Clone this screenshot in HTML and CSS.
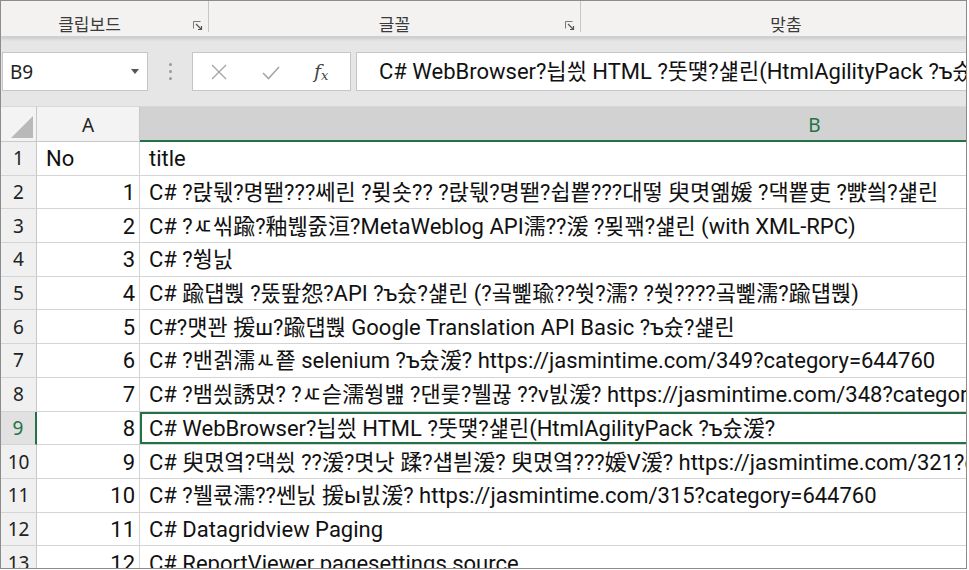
FILE: index.html
```html
<!DOCTYPE html>
<html lang="ko">
  <head>
    <meta charset="UTF-8" />
    <meta name="viewport" content="width=device-width, initial-scale=1.0" />
    <title>Excel - sheet</title>
    <link rel="stylesheet" href="styles.css">
  </head>
  <body>
    <div class="frame">
      <!-- Ribbon group labels -->
      <div class="ribbon">
        <div class="group group-clip">
          <span class="group-label">클립보드</span>
          <svg class="launcher" viewBox="0 0 10 10" width="10" height="10">
            <path d="M0.5 7.5V0.5H7.5" fill="none" stroke="#777" stroke-width="1"/>
            <path d="M3 3L8.5 8.5M5 8.5H8.5V5" fill="none" stroke="#555" stroke-width="1.2"/>
          </svg>
        </div>
        <div class="group group-font">
          <span class="group-label">글꼴</span>
          <svg class="launcher" viewBox="0 0 10 10" width="10" height="10">
            <path d="M0.5 7.5V0.5H7.5" fill="none" stroke="#777" stroke-width="1"/>
            <path d="M3 3L8.5 8.5M5 8.5H8.5V5" fill="none" stroke="#555" stroke-width="1.2"/>
          </svg>
        </div>
        <div class="group group-align">
          <span class="group-label">맞춤</span>
        </div>
      </div>

      <!-- Name box and formula bar -->
      <div class="formula-area">
        <div class="name-box">
          <span>B9</span>
          <span class="caret"></span>
        </div>
        <div class="grip"><i></i><i></i><i></i></div>
        <div class="fx-buttons">
          <svg class="fx-btn" viewBox="0 0 20 20" width="20" height="20">
            <path d="M3 3L17 17M17 3L3 17" stroke="#a6a6a6" stroke-width="1.4" fill="none"/>
          </svg>
          <svg class="fx-btn" viewBox="0 0 20 20" width="20" height="20">
            <path d="M2 11L7.5 16.5L18 5" stroke="#a6a6a6" stroke-width="1.6" fill="none"/>
          </svg>
          <span class="fx-label">f<sub>x</sub></span>
        </div>
        <div class="formula-input">C# WebBrowser?늽씠 HTML ?뚯떛?섍린(HtmlAgilityPack ?ъ슜湲?</div>
      </div>

      <!-- Worksheet grid -->
      <div class="sheet">
        <div class="corner"><span class="corner-tri"></span></div>
        <div class="col-head">A</div>
        <div class="col-head active">B</div>

        <div class="row-head">1</div>
        <div class="cell">No</div>
        <div class="cell">title</div>

        <div class="row-head">2</div>
        <div class="cell num">1</div>
        <div class="cell">C# ?랁뒋?명뙏???쎄린 ?뮞숏?? ?랁뒋?명뙏?쉽뿉???대떻 臾몃옒媛 ?댁뿉吏 ?뺤씤?섍린</div>

        <div class="row-head">3</div>
        <div class="cell num">2</div>
        <div class="cell">C# ?ㅼ씪踰?釉붾줈洹?MetaWeblog API濡??湲 ?묒꽦?섍린 (with XML-RPC)</div>

        <div class="row-head">4</div>
        <div class="cell num">3</div>
        <div class="cell">C# ?쒕닔</div>

        <div class="row-head">5</div>
        <div class="cell num">4</div>
        <div class="cell">C# 踰덉뿭 ?뚰뙆怨?API ?ъ슜?섍린 (?곸뼱瑜??쒓?濡? ?쒓????곸뼱濡?踰덉뿭)</div>

        <div class="row-head">6</div>
        <div class="cell num">5</div>
        <div class="cell">C#?먯꽌 援ш?踰덉뿭 Google Translation API Basic ?ъ슜?섍린</div>

        <div class="row-head">7</div>
        <div class="cell num">6</div>
        <div class="cell">C# ?밴겕濡ㅻ쭅 selenium ?ъ슜湲? https://jasmintime.com/349?category=644760</div>

        <div class="row-head">8</div>
        <div class="cell num">7</div>
        <div class="cell">C# ?뱀씠誘몄? ?ㅼ슫濡쒕뱶 ?댄룿?뷀뀮 ??v빐湲? https://jasmintime.com/348?category=644760</div>

        <div class="row-head active">9</div>
        <div class="cell num">8</div>
        <div class="cell selected">C# WebBrowser?늽씠 HTML ?뚯떛?섍린(HtmlAgilityPack ?ъ슜湲?</div>

        <div class="row-head">10</div>
        <div class="cell num">9</div>
        <div class="cell">C# 臾몄옄?댁씠 ??湲?몃낫 蹂?섑븯湲? 臾몄옄???媛V湲? https://jasmintime.com/321?category=644760</div>

        <div class="row-head">11</div>
        <div class="cell num">10</div>
        <div class="cell">C# ?뷀쿇濡??쎈닔 援ы빐湲? https://jasmintime.com/315?category=644760</div>

        <div class="row-head">12</div>
        <div class="cell num">11</div>
        <div class="cell">C# Datagridview Paging</div>

        <div class="row-head">13</div>
        <div class="cell num">12</div>
        <div class="cell">C# ReportViewer pagesettings source</div>
      </div>
    </div>
  </body>
</html>
```

FILE: styles.css
```css
body {
  margin: 0;
  padding: 0;
  background-color: #fff;
  font-family: "Noto Sans", "Noto Sans CJK KR", sans-serif;
  color: #111;
}
.frame {
  width: 967px;
  height: 569px;
  box-sizing: border-box;
  border: 1px solid #8c8c8c;
  overflow: hidden;
  background-color: #e6e6e6;
}
/* Ribbon group labels */
.ribbon {
  display: flex;
  height: 35px;
  background-color: #f3f2f1;
  border-bottom: 1px solid #d2d0ce;
  box-shadow: 0 2px 3px rgba(0, 0, 0, 0.12);
}
.group {
  display: flex;
  flex-shrink: 0;
  align-items: center;
  justify-content: center;
  position: relative;
  height: 31px;
  border-right: 1px solid #c8c6c4;
  box-sizing: border-box;
}
.group-clip {
  width: 208px;
}
.group-font {
  width: 372px;
}
.group-align {
  width: 410px;
}
.group-label {
  font-size: 17px;
  color: #3b3b3b;
  font-family: "Noto Sans CJK KR", sans-serif;
  padding-top: 15px;
  line-height: 20px;
}
.group-clip .group-label {
  margin-right: 30px;
}
.group-align .group-label {
  margin-left: 1px;
}
.launcher {
  position: absolute;
  right: 5px;
  bottom: 1px;
}
/* Formula bar */
.formula-area {
  display: flex;
  align-items: center;
  height: 69px;
  padding: 0 0 0 1px;
}
.name-box {
  display: flex;
  flex-shrink: 0;
  align-items: center;
  justify-content: space-between;
  width: 146px;
  height: 39px;
  box-sizing: border-box;
  background-color: #fff;
  border: 1px solid #c6c6c6;
  padding: 0 8px 0 7px;
  font-size: 19px;
  color: #222;
}
.caret {
  width: 0;
  height: 0;
  border-left: 4px solid transparent;
  border-right: 4px solid transparent;
  border-top: 5px solid #555;
}
.grip {
  display: flex;
  flex-shrink: 0;
  flex-direction: column;
  gap: 4px;
  width: 44px;
  align-items: center;
}
.grip i {
  width: 3px;
  height: 3px;
  border-radius: 50%;
  background-color: #9a9a9a;
}
.fx-buttons {
  display: flex;
  flex-shrink: 0;
  align-items: center;
  width: 159px;
  height: 39px;
  box-sizing: border-box;
  background-color: #fff;
  border: 1px solid #c6c6c6;
  padding-left: 16px;
  gap: 32px;
}
.fx-label {
  font-family: "DejaVu Serif", serif;
  font-style: italic;
  font-size: 19px;
  color: #444;
  margin-left: 1px;
}
.fx-label sub {
  font-size: 13px;
  vertical-align: -2px;
}
.formula-input {
  flex: 1;
  margin-left: 5px;
  height: 39px;
  box-sizing: border-box;
  background-color: #fff;
  border: 1px solid #c6c6c6;
  border-right: none;
  padding-left: 22px;
  font-family: Roboto, "Noto Sans CJK KR", sans-serif;
  font-size: 22px;
  line-height: 37px;
  color: #111;
  white-space: nowrap;
  overflow: hidden;
}
/* Worksheet */
.sheet {
  display: grid;
  grid-template-columns: 36px 103px 1350px;
  grid-template-rows: 36px repeat(13, 33.7px);
  background-color: #fff;
}
.corner {
  position: relative;
  background-color: #f3f3f3;
  border-right: 1px solid #c8c8c8;
  border-bottom: 1px solid #c8c8c8;
  border-top: 1px solid #d8d8d8;
}
.corner-tri {
  position: absolute;
  right: 3px;
  bottom: 3px;
  width: 0;
  height: 0;
  border-left: 22px solid transparent;
  border-bottom: 22px solid #b9b9b9;
}
.col-head {
  display: flex;
  align-items: center;
  justify-content: center;
  background-color: #f3f3f3;
  border-top: 1px solid #d8d8d8;
  border-right: 1px solid #c8c8c8;
  border-bottom: 1px solid #c8c8c8;
  font-size: 19px;
  color: #222;
  padding-top: 2px;
}
.col-head.active {
  background-color: #d2d2d2;
  color: #217346;
  border-bottom: 2px solid #217346;
}
.row-head {
  display: flex;
  align-items: center;
  justify-content: center;
  background-color: #f0f0f0;
  border-right: 1px solid #c8c8c8;
  border-bottom: 1px solid #d4d4d4;
  font-size: 19px;
  color: #222;
}
.row-head.active {
  background-color: #e1e1e1;
  color: #217346;
  border-right: 2px solid #217346;
}
.cell {
  display: flex;
  align-items: center;
  padding: 2px 6px 0 9px;
  border-right: 1px solid #d4d4d4;
  border-bottom: 1px solid #d4d4d4;
  font-family: Roboto, "Noto Sans CJK KR", sans-serif;
  font-size: 22px;
  line-height: 30px;
  color: #111;
  white-space: nowrap;
  overflow: hidden;
}
.cell.num {
  justify-content: flex-end;
  padding-right: 4px;
}
.cell.selected {
  box-shadow: inset 0 0 0 2px #217346;
}
```
